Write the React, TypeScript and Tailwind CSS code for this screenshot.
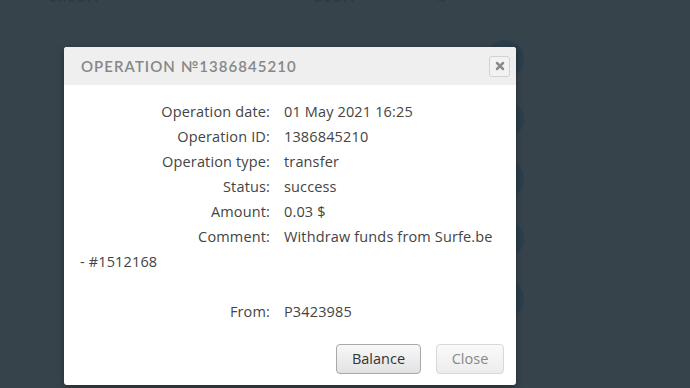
import { X } from "lucide-react";

const rows: [string, string][] = [
  ["Operation date:", "01 May 2021 16:25"],
  ["Operation ID:", "1386845210"],
  ["Operation type:", "transfer"],
  ["Status:", "success"],
  ["Amount:", "0.03 $"],
  ["Comment:", "Withdraw funds from Surfe.be"],
];

function Row({ label, value }: { label: string; value: string }) {
  return (
    <div className="flex h-[25px] items-center">
      <span className="w-[190px] text-right">{label}</span>
      <span className="ml-[14px]">{value}</span>
    </div>
  );
}

export default function App() {
  return (
    <div className="relative h-[388px] w-[690px] overflow-hidden bg-[#37434b] font-['Open_Sans',sans-serif]">
      {/* page behind the overlay */}
      <div className="-mt-[9px] flex h-[14px] items-center text-[13px] font-bold tracking-[0.1em] text-[#2e3a43]">
        <span className="ml-[48px]">CREDIT</span>
        <span className="ml-[212px]">DEBIT</span>
        <span className="ml-[76px]">%</span>
      </div>
      <div className="ml-[486px] mt-[35px] flex flex-col gap-[22px]">
        {[0, 1, 2, 3, 4].map((i) => (
          <div key={i} className="h-[38px] w-[38px] rounded-full bg-[#2b3e4b]" />
        ))}
      </div>

      {/* modal */}
      <div className="absolute left-[64px] top-[47px] w-[452px] overflow-hidden rounded-[3px] bg-white shadow-[0_2px_6px_rgba(0,0,0,0.35)]">
        <div className="flex h-[38px] items-center justify-between bg-[#efefef] pl-[17px] pr-[6px]">
          <span className="font-['Lato',sans-serif] text-[15px] font-semibold tracking-[0.07em] text-[#878787]">
            OPERATION №1386845210
          </span>
          <button className="flex h-[21px] w-[21px] items-center justify-center rounded-[3px] border border-[#d2d2d2] bg-[#f2f2f2]">
            <X size={12} strokeWidth={5} className="text-[#8c8c8c]" />
          </button>
        </div>
        <div className="pl-[16px] pt-[14px] text-[14.5px] tracking-[0.01em] text-[#444]">
          {rows.map(([l, v]) => (
            <Row key={l} label={l} value={v} />
          ))}
          <div className="flex h-[25px] items-center">- #1512168</div>
          <div className="h-[25px]" />
          <Row label="From:" value="P3423985" />
        </div>
        <div className="flex justify-end gap-[15px] pb-[11px] pr-[12px] pt-[20px] text-[14.5px]">
          <button className="h-[30px] w-[85px] rounded-[4px] border border-[#a8a8a8] bg-gradient-to-b from-[#f8f8f8] to-[#e2e2e2] text-[#333]">
            Balance
          </button>
          <button className="h-[30px] w-[68px] rounded-[4px] border border-[#d8d8d8] bg-gradient-to-b from-[#fafafa] to-[#ececec] text-[#888]">
            Close
          </button>
        </div>
      </div>
    </div>
  );
}
